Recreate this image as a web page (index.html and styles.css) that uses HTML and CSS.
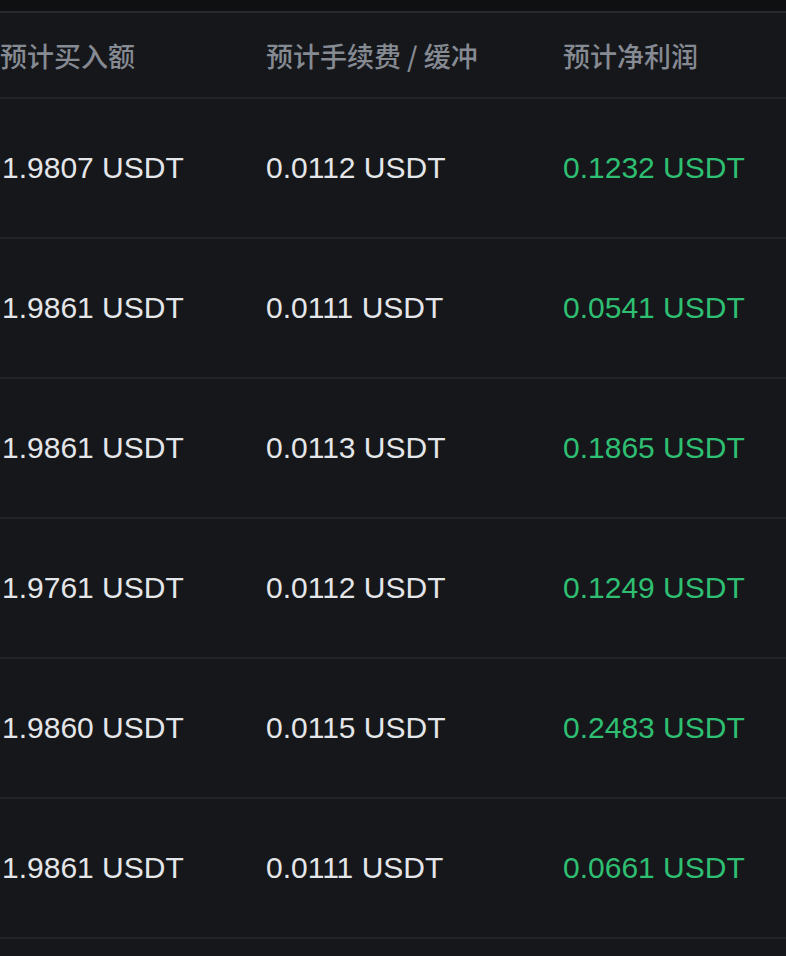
FILE: index.html
```html
<!DOCTYPE html>
<html lang="zh-CN">
<head>
  <meta charset="UTF-8">
  <meta name="viewport" content="width=device-width, initial-scale=1">
  <title>预计收益</title>
  <link rel="stylesheet" href="styles.css">
</head>
<body>
  <div class="topbar"></div>

  <div class="table">
    <div class="row head">
      <div class="cell">预计买入额</div>
      <div class="cell">预计手续费 / 缓冲</div>
      <div class="cell">预计净利润</div>
    </div>

    <div class="row">
      <div class="cell">1.9807 USDT</div>
      <div class="cell">0.0112 USDT</div>
      <div class="cell profit">0.1232 USDT</div>
    </div>
    <div class="row">
      <div class="cell">1.9861 USDT</div>
      <div class="cell">0.0111 USDT</div>
      <div class="cell profit">0.0541 USDT</div>
    </div>
    <div class="row">
      <div class="cell">1.9861 USDT</div>
      <div class="cell">0.0113 USDT</div>
      <div class="cell profit">0.1865 USDT</div>
    </div>
    <div class="row">
      <div class="cell">1.9761 USDT</div>
      <div class="cell">0.0112 USDT</div>
      <div class="cell profit">0.1249 USDT</div>
    </div>
    <div class="row">
      <div class="cell">1.9860 USDT</div>
      <div class="cell">0.0115 USDT</div>
      <div class="cell profit">0.2483 USDT</div>
    </div>
    <div class="row">
      <div class="cell">1.9861 USDT</div>
      <div class="cell">0.0111 USDT</div>
      <div class="cell profit">0.0661 USDT</div>
    </div>
  </div>
</body>
</html>
```

FILE: styles.css
```css
body {
  margin: 0;
  font-family: 'Liberation Sans', 'Noto Sans CJK SC', sans-serif;
  background: #16171a;
  color: #e4e6e9;
}

.topbar {
  height: 11px;
  background: #0f1012;
  border-bottom: 2px solid #26282c;
}

.row {
  display: grid;
  grid-template-columns: 266px 297px 1fr;
  align-items: center;
  height: 138px;
  border-bottom: 2px solid #222428;
  font-size: 30px;
}

.row.head {
  height: 84px;
  font-family: 'Noto Sans CJK SC', sans-serif;
  font-size: 27px;
  font-weight: 500;
  color: #858a93;
}

.cell {
  white-space: nowrap;
}

.row .cell:first-child {
  padding-left: 2px;
}

.row.head .cell:first-child {
  padding-left: 0;
}

.profit {
  color: #2ebf72;
}
```
